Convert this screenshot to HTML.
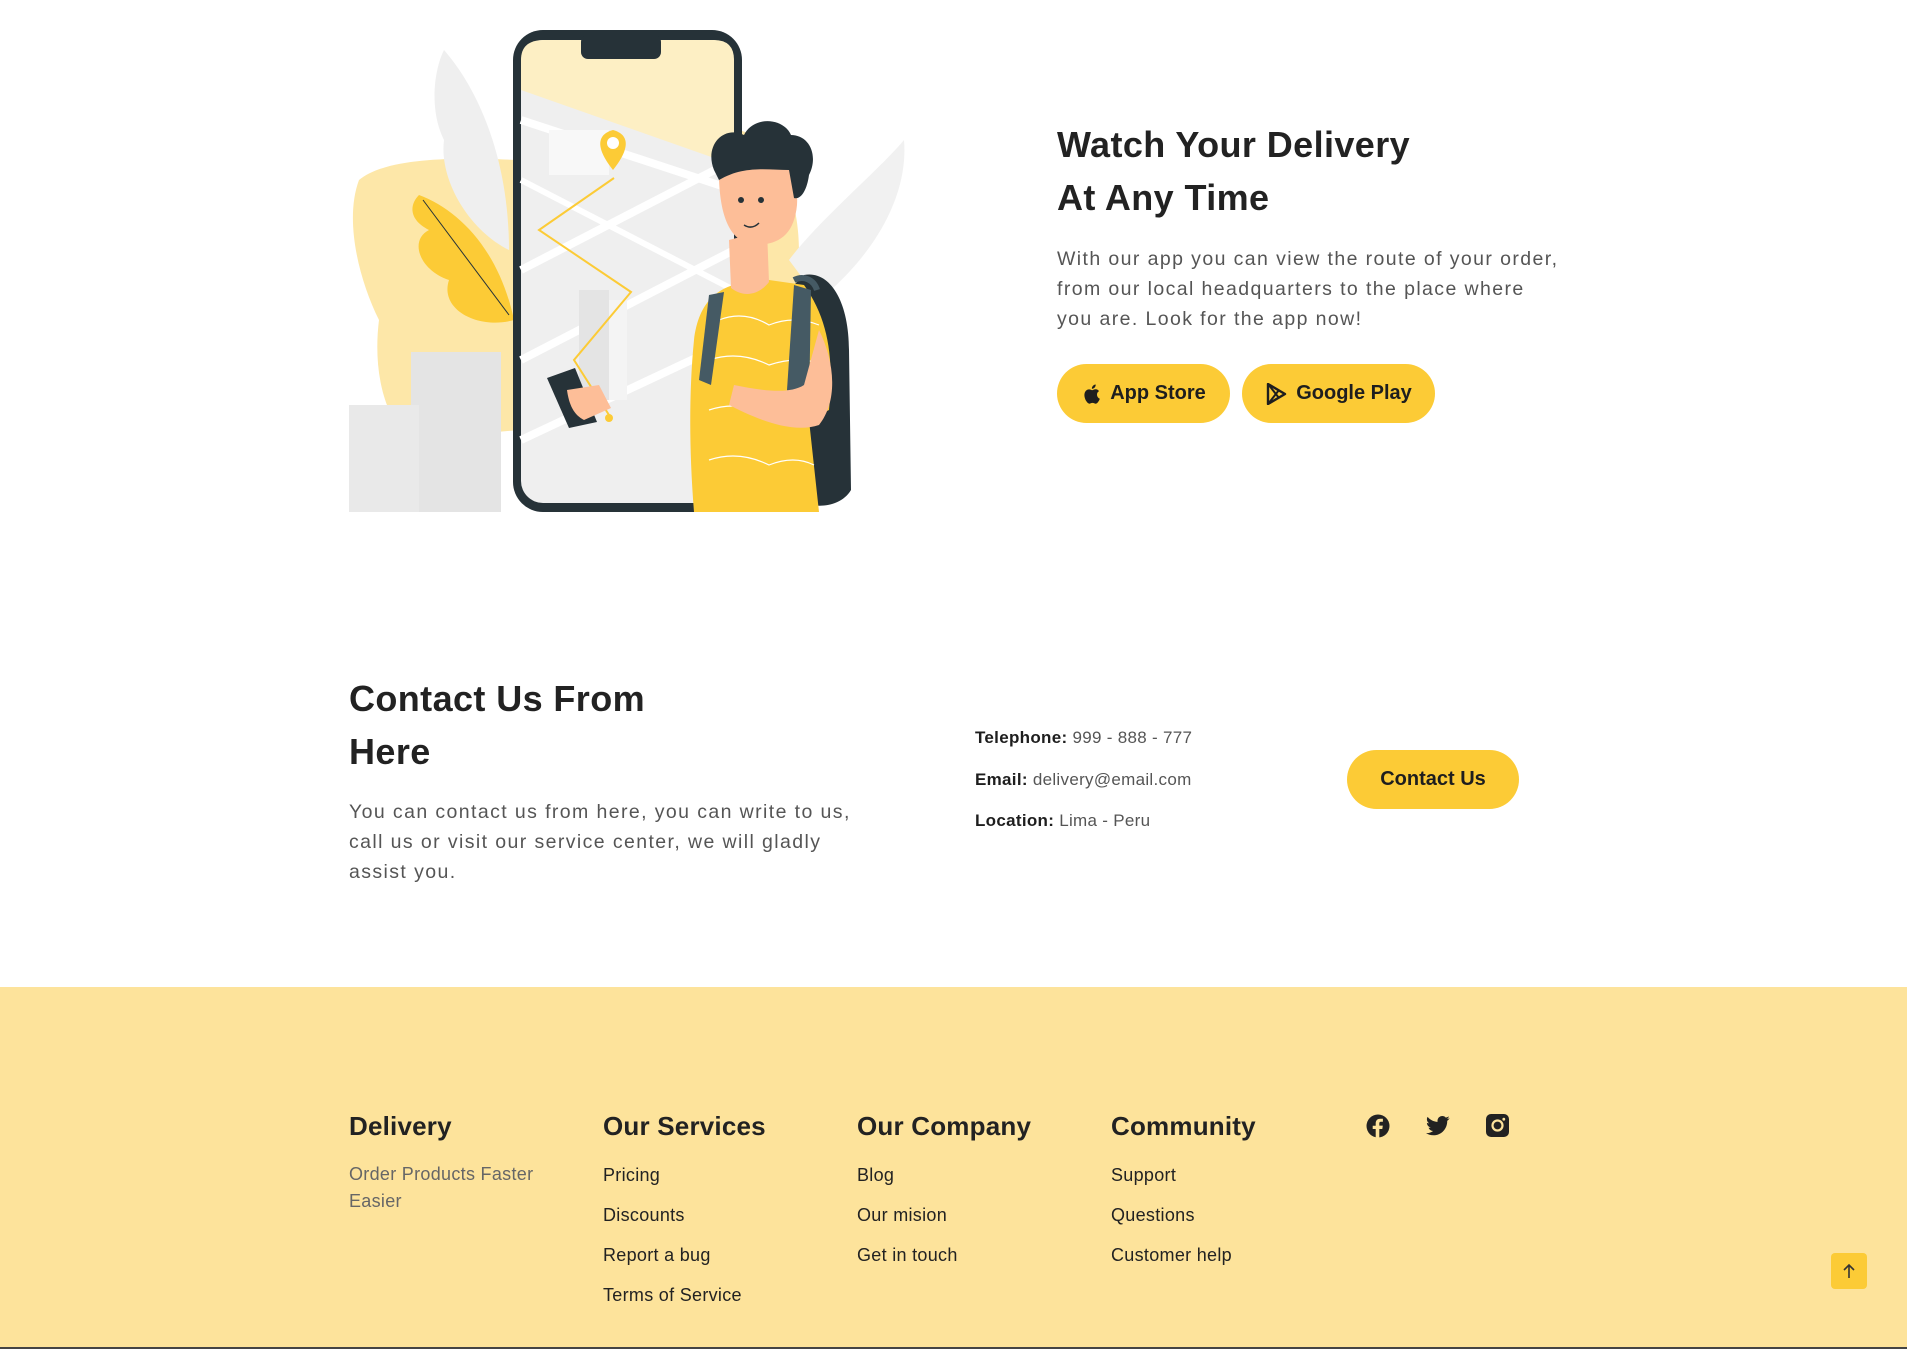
<!DOCTYPE html>
<html><head><meta charset="utf-8">
<style>
*{margin:0;padding:0;box-sizing:border-box}
body{width:1907px;height:1349px;overflow:hidden;background:#fff;font-family:"Liberation Sans",sans-serif;color:#222;position:relative}
.abs{position:absolute}
h2{font-size:36px;font-weight:700;line-height:53px;color:#222;letter-spacing:0.4px}
.p{font-size:19.5px;line-height:30px;color:#555;letter-spacing:1.4px;white-space:nowrap}
.btn{position:absolute;background:#FCCB36;border-radius:30px;font-weight:700;font-size:20px;color:#1e1e1e;display:flex;align-items:center;justify-content:center;gap:9px}
.info{font-size:17px;color:#555;line-height:20px;letter-spacing:0.3px}
.info b{color:#1e1e1e}
footer{position:absolute;left:0;top:987px;width:1907px;height:362px;background:#FDE39B}
.col{position:absolute;top:122px}
.col h3{font-size:26px;font-weight:700;color:#222;line-height:34px;letter-spacing:0.2px}
.col a{display:block;font-size:18px;color:#222;text-decoration:none;line-height:22px;margin-top:18px;letter-spacing:0.3px}
.col a:first-of-type{margin-top:21px}
</style></head><body>

<svg class="abs" style="left:349px;top:30px" width="590" height="485" viewBox="0 0 590 485">
  <path d="M10 150 C40 125 120 128 170 130 L170 400 L60 410 C30 380 25 330 30 290 C10 250 -5 190 10 150Z" fill="#FDE7A8"/>
  <path d="M390 100 C430 110 450 170 450 220 C480 250 500 300 488 350 C470 385 440 380 430 370 L400 200Z" fill="#FDE7A8"/>
  <path d="M95 20 C130 60 160 130 160 220 C120 200 90 150 95 110 C80 80 85 40 95 20Z" fill="#efefef"/>
  <path d="M440 230 C470 190 530 140 555 110 C560 170 520 230 470 270 Z" fill="#f1f1f1"/>
  <path d="M70 165 C110 180 150 220 165 290 C130 300 90 280 100 250 C70 240 60 210 80 200 C60 190 60 175 70 165Z" fill="#FCCB36"/>
  <path d="M74 170 L160 285" stroke="#263238" stroke-width="1" fill="none"/>
  <rect x="62" y="322" width="90" height="160" fill="#e4e4e4"/>
  <rect x="0" y="375" width="70" height="107" fill="#e9e9e9"/>
  <path d="M298 80 C305 50 320 35 330 40 C330 60 315 80 298 90Z" fill="#3d4f5a"/>
  <path d="M290 95 C310 85 325 85 330 92 C315 100 300 100 290 98Z" fill="#3d4f5a"/>
  <rect x="164" y="0" width="229" height="482" rx="30" fill="#263238"/>
  <rect x="172" y="10" width="213" height="463" rx="22" fill="#efefef"/>
  <path d="M172 30 Q172 10 195 10 L365 10 Q385 10 385 30 L385 135 L172 60Z" fill="#FDEFC4"/>
  <rect x="232" y="5" width="80" height="24" rx="7" fill="#263238"/>
  <path d="M172 90 L385 160" stroke="#fff" stroke-width="8"/>
  <path d="M172 240 L385 130" stroke="#fff" stroke-width="8"/>
  <path d="M172 330 L385 220" stroke="#fff" stroke-width="8"/>
  <path d="M172 410 L385 310" stroke="#fff" stroke-width="8"/>
  <path d="M172 150 L385 260" stroke="#fff" stroke-width="6"/>
  <rect x="200" y="100" width="60" height="45" fill="#f8f8f8"/>
  <rect x="230" y="260" width="30" height="110" fill="#e4e4e4"/>
  <rect x="260" y="270" width="18" height="100" fill="#f4f4f4"/>
  <path d="M265 148 L190 200 L282 262 L225 330 L260 385" stroke="#FCCB36" stroke-width="2" fill="none"/>
  <circle cx="260" cy="388" r="4" fill="#FCCB36"/>
  <path d="M264 140 C248 120 246 105 264 100 C282 105 280 120 264 140Z" fill="#FCCB36"/>
  <circle cx="264" cy="113" r="6" fill="#fff"/>
  <path d="M455 245 C480 240 500 270 500 320 L502 460 C490 480 460 478 450 470 L440 260Z" fill="#263238"/>
  <path d="M445 250 C455 245 465 250 468 260" stroke="#455a64" stroke-width="6" fill="none"/>
  <path d="M345 482 C340 420 340 360 345 310 C350 270 370 250 420 250 L455 255 C480 290 485 330 480 380 L460 390 L470 482Z" fill="#FCCB36"/>
  <path d="M370 290 Q395 280 420 295 Q445 285 470 295 M360 330 Q390 320 420 335 Q450 325 475 335 M360 380 Q390 370 420 385 M360 430 Q390 420 420 435 Q445 425 465 435" stroke="#fff" stroke-width="1.2" fill="none"/>
  <path d="M360 265 L350 350 L362 355 L375 262Z" fill="#455a64"/>
  <path d="M445 255 L438 360 L460 380 L462 260Z" fill="#455a64"/>
  <path d="M380 210 L382 258 C395 268 410 265 420 252 L418 200Z" fill="#FDBE98"/>
  <path d="M370 150 C365 120 380 115 410 115 C435 118 450 140 448 175 C445 205 430 215 405 215 C385 212 372 195 370 150Z" fill="#FDBE98"/>
  <path d="M365 140 C355 115 375 95 395 105 C405 85 435 88 442 105 C460 105 470 125 460 145 C458 160 452 170 445 168 L440 140 C420 140 395 135 370 150Z" fill="#263238"/>
  <circle cx="392" cy="170" r="3" fill="#263238"/><circle cx="412" cy="170" r="3" fill="#263238"/>
  <path d="M395 195 Q403 200 410 193" stroke="#263238" stroke-width="1.5" fill="none"/>
  <path d="M470 300 C485 330 490 370 470 395 C440 405 400 385 380 375 L385 355 C410 360 440 365 455 355Z" fill="#FDBE98"/>
  <path d="M198 348 L226 338 L248 392 L220 398Z" fill="#263238"/>
  <path d="M218 360 L250 355 L262 378 L235 390 C225 385 220 375 218 360Z" fill="#FDBE98"/>
</svg>

<h2 class="abs" style="left:1057px;top:118px">Watch Your Delivery<br>At Any Time</h2>
<p class="abs p" style="left:1057px;top:244px">With our app you can view the route of your order,<br>from our local headquarters to the place where<br>you are. Look for the app now!</p>
<div class="btn" style="left:1057px;top:364px;width:173px;height:59px"><svg width="20" height="22" viewBox="0 0 20 22"><path d="M16 11.5c0-2.4 2-3.3 2-3.4-1.1-1.6-2.8-1.8-3.4-1.8-1.4-.1-2.8.9-3.5.9-.7 0-1.8-.9-3-.8C6.5 6.4 5 7.3 4.2 8.7c-1.7 2.9-.4 7.2 1.2 9.6.8 1.1 1.7 2.4 3 2.4 1.2 0 1.6-.8 3.1-.8s1.8.8 3.1.8c1.3 0 2.1-1.2 2.9-2.3.9-1.3 1.3-2.6 1.3-2.7-.1 0-2.8-1.1-2.8-4.2zM13.7 4.5c.6-.8 1.1-1.9 1-3-1 0-2.1.6-2.8 1.4-.6.7-1.2 1.8-1 2.9 1 .1 2.1-.5 2.8-1.3z" fill="#1e1e1e"/></svg>App Store</div>
<div class="btn" style="left:1242px;top:364px;width:193px;height:59px"><svg width="22" height="22" viewBox="0 0 22 22"><path d="M3 1 L3 21 L20 11Z" fill="none" stroke="#1e1e1e" stroke-width="2.4" stroke-linejoin="round"/><path d="M3 1 L14 15 M3 21 L14 7" stroke="#1e1e1e" stroke-width="2"/></svg>Google Play</div>

<h2 class="abs" style="left:349px;top:672px">Contact Us From<br>Here</h2>
<p class="abs p" style="left:349px;top:797px">You can contact us from here, you can write to us,<br>call us or visit our service center, we will gladly<br>assist you.</p>
<div class="abs info" style="left:975px;top:728px"><b>Telephone:</b> 999 - 888 - 777</div>
<div class="abs info" style="left:975px;top:770px"><b>Email:</b> delivery@email.com</div>
<div class="abs info" style="left:975px;top:811px"><b>Location:</b> Lima - Peru</div>
<div class="btn" style="left:1347px;top:750px;width:172px;height:59px">Contact Us</div>

<footer>
  <div class="col" style="left:349px"><h3>Delivery</h3><p style="font-size:18px;color:#666;line-height:27px;margin-top:18px;width:200px;letter-spacing:0.3px">Order Products Faster Easier</p></div>
  <div class="col" style="left:603px"><h3>Our Services</h3><a>Pricing</a><a>Discounts</a><a>Report a bug</a><a>Terms of Service</a></div>
  <div class="col" style="left:857px"><h3>Our Company</h3><a>Blog</a><a>Our mision</a><a>Get in touch</a></div>
  <div class="col" style="left:1111px"><h3>Community</h3><a>Support</a><a>Questions</a><a>Customer help</a></div>
  <svg class="abs" style="left:1366px;top:127px" width="24" height="24" viewBox="0 0 24 24"><circle cx="12" cy="12" r="11.5" fill="#222"/><path d="M13.3 24V15h3l.5-3.4h-3.5V9.5c0-1 .3-1.7 1.7-1.7h1.9V4.8c-.3 0-1.4-.1-2.7-.1-2.7 0-4.5 1.6-4.5 4.6v2.4H6.7V15h3v9z" fill="#FDE39B"/></svg>
  <svg class="abs" style="left:1426px;top:129px" width="24" height="20" viewBox="0 0 24 20"><path d="M23.6 2.3c-.9.4-1.8.6-2.8.8 1-.6 1.8-1.5 2.1-2.7-.9.6-2 1-3.1 1.2C18.9.6 17.7 0 16.3 0c-2.7 0-4.8 2.2-4.8 4.8 0 .4 0 .8.1 1.1C7.5 5.7 4 3.8 1.6.9c-.4.7-.7 1.6-.7 2.4 0 1.7.9 3.2 2.200 4-.8 0-1.5-.2-2.2-.6v.1c0 2.3 1.7 4.3 3.9 4.7-.4.1-.8.2-1.3.2-.3 0-.6 0-.9-.1.6 1.9 2.4 3.3 4.5 3.4-1.7 1.3-3.7 2.1-6 2.1H0c2.1 1.4 4.7 2.2 7.4 2.2 8.9 0 13.8-7.4 13.8-13.8v-.6c.9-.7 1.7-1.5 2.4-2.5z" fill="#222"/></svg>
  <svg class="abs" style="left:1486px;top:127px" width="23" height="23" viewBox="0 0 23 23"><rect x="0" y="0" width="23" height="23" rx="5" fill="#222"/><circle cx="11.5" cy="11.5" r="5" fill="none" stroke="#FDE39B" stroke-width="2.2"/><circle cx="17.8" cy="5.2" r="1.4" fill="#FDE39B"/></svg>
  <div class="abs" style="left:1831px;top:266px;width:36px;height:36px;background:#FCCB36;border-radius:4px;display:flex;align-items:center;justify-content:center"><svg width="14" height="16" viewBox="0 0 14 16"><path d="M7 15V2 M2 7 L7 2 L12 7" stroke="#333" stroke-width="1.6" fill="none"/></svg></div>
</footer>
<div class="abs" style="left:0;top:1347px;width:1907px;height:2px;background:#444"></div>
</body></html>
